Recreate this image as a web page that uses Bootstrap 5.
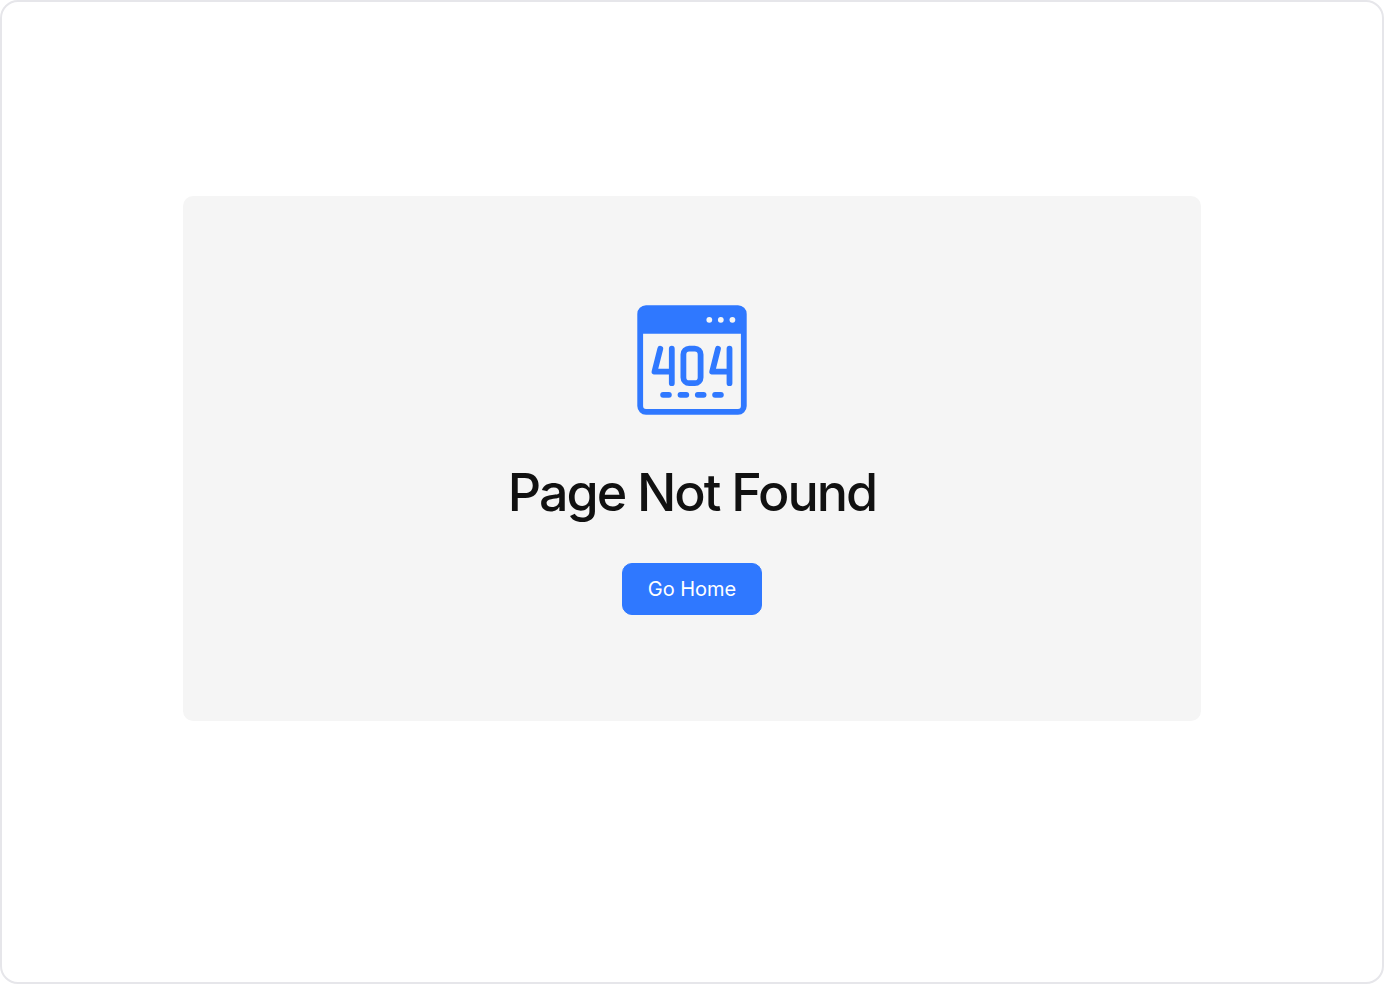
<!DOCTYPE html>
<html lang="en">
<head>
<meta charset="utf-8">
<meta name="viewport" content="width=device-width, initial-scale=1">
<title>Page Not Found</title>
<link href="https://cdn.jsdelivr.net/npm/bootstrap@5.3.0/dist/css/bootstrap.min.css" rel="stylesheet">
<style>
body { font-family: Inter, "Liberation Sans", sans-serif; background: #fff; }
.frame { border: 2px solid #e6e6ea; border-radius: 18px; padding: 0 13.08% 67px; }
.panel { background: #f5f5f5; border-radius: 10px; padding: 106px 24px; }
.panel h1 { font-size: 52px; line-height: 64px; font-weight: 500; letter-spacing: -2px; color: #111; margin: 43px 0 38px; }
.btn-home { --bs-btn-color: #fff; --bs-btn-bg: #2f78ff; --bs-btn-border-color: #2f78ff; --bs-btn-hover-color: #fff; --bs-btn-hover-bg: #1c68ee; --bs-btn-border-radius: 10px; --bs-btn-font-size: 20px; --bs-btn-padding-x: 25px; --bs-btn-padding-y: 10px; --bs-btn-line-height: 30px; }
</style>
</head>
<body>
<div class="frame min-vh-100 d-flex flex-column justify-content-center">
<main class="panel d-flex flex-column align-items-center text-center">
<svg width="116" height="116" viewBox="0 0 116 116" fill="none" stroke="#2f78ff" stroke-width="5.8" stroke-linecap="round" stroke-linejoin="round" aria-hidden="true">
<rect x="6.2" y="6.2" width="103.6" height="103.6" rx="5.8"/>
<path d="M6 9h104v22.7H6z" fill="#2f78ff" stroke="none"/>
<g fill="#f5f5f5" stroke="none"><circle cx="75.3" cy="17.8" r="2.9"/><circle cx="86.8" cy="17.8" r="2.9"/><circle cx="98.4" cy="17.8" r="2.9"/></g>
<path d="M26.3 46.7l-5.8 23h17.3M37.8 46.7v34.5M84 46.7l-5.8 23h17.3M95.5 46.7v34.5"/>
<rect x="49.4" y="46.7" width="17.2" height="34.5" rx="5.8"/>
<path d="M29.1 92.8h5.8M46.5 92.8h5.8M63.8 92.8h5.8M81.1 92.8h5.8"/>
</svg>
<h1>Page Not Found</h1>
<button type="button" class="btn btn-home">Go Home</button>
</main>
</div>
<script src="https://cdn.jsdelivr.net/npm/bootstrap@5.3.0/dist/js/bootstrap.bundle.min.js"></script>
</body>
</html>
